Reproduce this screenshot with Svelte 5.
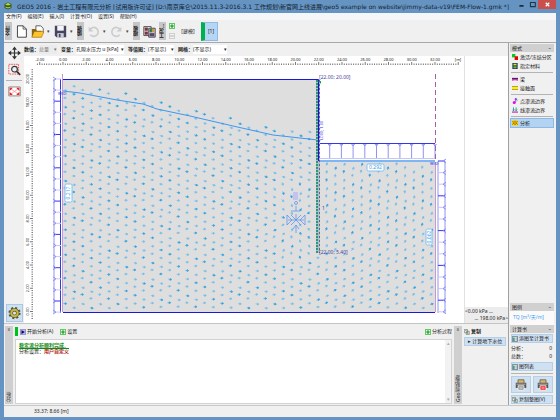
<script>
  const menus = ['文件(F)', '编辑(E)', '输入(I)', '计算书(O)', '设置(S)', '帮助(H)'];

  const modes = [
    { icon: 'zones', label: '激活/冻结分区' },
    { icon: 'material', label: '指定材料', last: true },
    { icon: 'beam', label: '梁' },
    { icon: 'contact', label: '接触面', last: true },
    { icon: 'point', label: '点渗流边界' },
    { icon: 'line', label: '线渗流边界', last: true },
    { icon: 'analysis', label: '分析' }
  ];
  let activeMode = 'analysis';

  // model geometry: 2 m = 23.25 units, origin in the lower left corner
  const left = 63;
  const right = 435;
  const wall = 318;
  const top = 79;
  const dig = 161;
  const bottom = 312;
  const step = 23.25;

  const water = [[63, 91], [80, 93], [117, 100], [143, 104], [157, 109], [190, 116], [233, 126], [273, 135], [318, 140]];

  const xLabels = Array.from({ length: 18 }, (_, i) => ({ x: left + (i - 1) * step, text: ((i - 1) * 2).toFixed(2) }));
  const yLabels = Array.from({ length: 11 }, (_, i) => ({ y: top + i * step, text: (20 - i * 2).toFixed(2) }));
  const xTicks = Array.from({ length: 182 }, (_, i) => ({ x: 37.4 + i * 2.325, long: (i - 1) % 10 === 0 }));
  const yTicks = Array.from({ length: 108 }, (_, i) => ({ y: 69.7 + i * 2.325, long: (i - 4) % 10 === 0 }));

  const leftRungs = Array.from({ length: 22 }, (_, i) => 79 + i * 11.1);
  const rightRungs = Array.from({ length: 14 }, (_, i) => 161 + i * 11.6);
  const topRungs = Array.from({ length: 11 }, (_, i) => 318 + i * 11.7);

  function waterLevel(x) {
    for (let i = 1; i < water.length; i++) {
      const [x0, y0] = water[i - 1];
      const [x1, y1] = water[i];
      if (x <= x1) return y0 + ((y1 - y0) * (x - x0)) / (x1 - x0);
    }
    return dig;
  }

  // seepage vectors run towards the well and up behind the wall
  function flowArrows() {
    const list = [];
    for (let c = 0; c < 43; c++) {
      for (let r = 0; r < 29; r++) {
        const jitter = Math.sin(c * 12.9 + r * 78.2);
        const x = 65 + c * 8.72 + jitter * 0.5;
        const y = 82 + r * 8.2 + (c % 2) * 4 + jitter * 0.7;
        if (x > right - 2 || y > bottom - 2) continue;
        if (x > wall - 4 && x < wall + 4 && y < 256) continue;
        if (x > wall && y < dig + 3) continue;
        if (x <= wall && y < waterLevel(x) - 8) continue;
        const dist = Math.hypot(x - 296, y - 220);
        if (dist < 7) continue;
        let angle;
        if (dist < 40 && x < wall) angle = Math.atan2(220 - y, 296 - x);
        else if (x < wall) angle = 0.05 + ((x - left) / 255) * (y < 200 ? 0.25 : -0.05);
        else angle = -1.35 + (Math.max(y - 200, 0) / 112) * 1.1;
        angle += jitter * 0.12;
        list.push({ x, y, deg: (angle * 180) / Math.PI, strong: (c * 7 + r * 5) % 3 === 0 });
      }
    }
    return list;
  }
  const arrows = flowArrows();
</script>

{#snippet icon(name)}
  <svg class="icon" viewBox="0 0 16 16" aria-hidden="true">
    {#if name === 'zones'}
      <path d="M0 0h9v9H0z" fill="#0c2" />
      <path d="M7 6h9v10H7z" fill="#e00" />
    {:else if name === 'material'}
      <path d="M1 0h14v16H1z" fill="#143c50" />
      <path d="M4 2h8v4H4z" fill="#fd0" />
      <path d="M4 7h8v3H4z" fill="#0c9" />
      <path d="M4 11h8v3H4z" fill="#e90" />
    {:else if name === 'beam'}
      <path d="M0 5h16v4H0z" fill="#333" />
      <path d="M1 13V9h14v4M5 13V9M11 13V9" fill="none" stroke="#d0d" stroke-width="2" />
    {:else if name === 'contact'}
      <path d="M0 3h16v10H0z" fill="#fe0" />
      <path d="M0 4h16M0 12h16" stroke="#985" stroke-width="2" />
    {:else if name === 'point'}
      <path d="M10 2v9M10 3l5 3" stroke="#17a" stroke-width="2" fill="none" />
      <circle cx="6" cy="12" r="4" fill="#e0e" />
      <circle cx="10" cy="3" r="3" fill="#a3e" />
    {:else if name === 'line'}
      <path d="M4 1v9M11 1v9M1 7l3 3 3-3M8 7l3 3 3-3" stroke="#088" stroke-width="2" fill="none" />
      <path d="M0 12h16v3H0z" fill="#b2a" />
    {:else if name === 'analysis'}
      <path d="M0 1h16v14H0z" fill="#fd0" />
      <path d="M0 2l4 4 4-4 4 4 4-4M0 13l4-4 4 4 4-4 4 4M2 8h12" stroke="#732" stroke-width="1.5" fill="none" />
    {:else if name === 'play'}
      <path d="M1 1h14v14H1z" fill="#b8bdf0" stroke="#228" />
      <path d="M4 3l9 5-9 5z" fill="#006" />
    {:else if name === 'plus'}
      <path d="M1 1h14v14H1z" fill="#efe" stroke="#2a2" stroke-width="2" />
      <path d="M8 3v10M3 8h10" stroke="#091" stroke-width="3" />
    {:else if name === 'minus'}
      <path d="M1 1h14v14H1z" fill="#f4f4f4" stroke="#bbb" stroke-width="2" />
      <path d="M3 8h10" stroke="#999" stroke-width="2" />
    {:else if name === 'picture'}
      <path d="M1 1h14v14H1z" fill="#eef4fa" stroke="#567" stroke-width="2" />
      <path d="M3 4h4v9H3z" fill="#296" />
      <path d="M9 5h5M9 8h5M9 11h5" stroke="#345" />
    {:else if name === 'copy'}
      <path d="M1 1h8v9H1zM6 6h8v9H6z" fill="#fff" stroke="#555" stroke-width="1.5" />
      <path d="M3 4h4M8 9h4M8 12h4" stroke="#284" stroke-width="1.5" />
    {/if}
  </svg>
{/snippet}

<div class="window">
  <header class="titlebar">
    <svg class="logo" viewBox="0 0 16 16" aria-hidden="true">
      <path d="M1 4l7-3 7 3v8l-7 3-7-3z" fill="#2c5a28" />
      <path d="M2 5l6 2 6-2-6-3z" fill="#c3d92f" />
      <path d="M3 9l5 2 5-2v2l-5 2-5-2z" fill="#dccf35" />
    </svg>
    <h1>GEO5 2016 - 岩土工程有限元分析 [试用版许可证] [D:\南京库仑\2015.11.3-2016.3.1 工作规划\新官网上线进展\geo5 example on website\jimmy-data-v19\FEM-Flow-1.gmk *]</h1>
    <button class="caption" aria-label="最小化"><svg viewBox="0 0 10 10"><path d="M2 7h6" stroke="#111" stroke-width="2" /></svg></button>
    <button class="caption" aria-label="最大化"><svg viewBox="0 0 10 10"><path d="M2 2h7v6H2z" fill="none" stroke="#234" stroke-width="1.5" /></svg></button>
    <button class="caption close" aria-label="关闭"><svg viewBox="0 0 10 10"><path d="M2.500 2.500l5 5M7.500 2.500l-5 5" stroke="#fff" stroke-width="1.700" /></svg></button>
  </header>

  <nav class="menu">
    {#each menus as item}
      <button>{item}</button>
    {/each}
  </nav>

  <div class="toolbar">
    <span class="grip">文件</span>
    <button class="tool" aria-label="新建">
      <svg viewBox="0 0 16 16"><path d="M3 1h7l4 4v10H3z" fill="#fff" stroke="#444" stroke-width="1.200" /><path d="M10 1v4h4" fill="none" stroke="#444" /></svg>
    </button>
    <button class="tool" aria-label="打开">
      <svg viewBox="0 0 16 16"><path d="M6 1h6l3 3v6H6z" fill="#fff" stroke="#444" /><path d="M1 5h5l1 2h6v8H1z" fill="#8a6410" /><path d="M4 8h12l-3 7H1z" fill="#ffc327" stroke="#8a6410" stroke-width=".6" /></svg>
    </button>
    <span class="drop">▾</span>
    <button class="tool" aria-label="保存">
      <svg viewBox="0 0 16 16"><path d="M1 1h14v14H3l-2-2z" fill="#45455e" /><path d="M4 1h8v6H4z" fill="#f3f5fa" /><path d="M4 10h8v5H4z" fill="#c8ccd8" /><path d="M6 11h2v4H6z" fill="#45455e" /></svg>
    </button>
    <span class="drop">▾</span>
    <span class="grip">编辑</span>
    <button class="tool" aria-label="撤销" disabled>
      <svg viewBox="0 0 16 16"><path d="M4 5a5.500 5.500 0 1 1 0 7" fill="none" stroke="#ccc" stroke-width="2" /><path d="M2 2v6h6z" fill="#ccc" /></svg>
    </button>
    <span class="drop">▾</span>
    <button class="tool" aria-label="重做" disabled>
      <svg viewBox="0 0 16 16"><path d="M12 5a5.500 5.500 0 1 0 0 7" fill="none" stroke="#ccc" stroke-width="2" /><path d="M14 2v6H8z" fill="#ccc" /></svg>
    </button>
    <span class="drop">▾</span>
    <span class="grip">模板</span>
    <button class="tool" aria-label="模板">
      <svg viewBox="0 0 16 16"><path d="M1 2h9v11H1z" fill="#fff" stroke="#333" /><path d="M2 3h4v4H2zM2 8h4v4H2z" fill="#734" /><path d="M7 4h8v11H7z" fill="#dce" stroke="#333" /><path d="M8 5h3v4H8z" fill="#2a7a3a" /><path d="M11 5h3v4h-3z" fill="#c93" /><path d="M8 10h6v4H8z" fill="#534a68" /></svg>
    </button>
    <span class="grip">工况…</span>
    <div class="stage-edit">
      <button aria-label="添加工况">{@render icon('plus')}</button>
      <button aria-label="删除工况">{@render icon('minus')}</button>
    </div>
    <button class="stage">[建模]</button>
    <button class="stage on">[1]</button>
  </div>

  <div class="body">
    <main>
      <section class="upper">
        <div class="tools">
          <button aria-label="平移">
            <svg viewBox="0 0 16 16"><path d="M8 2v12M2 8h12" stroke="#333" stroke-width="1.500" /><path d="M8 0l3 4H5zM8 16l3-4H5zM0 8l4-3v6zM16 8l-4-3v6z" fill="#333" /></svg>
          </button>
          <button aria-label="缩放窗口">
            <svg viewBox="0 0 16 16"><path d="M1 1h12v12H1z" fill="none" stroke="#e33" stroke-dasharray="2 1" /><circle cx="8" cy="7" r="3.500" fill="#eef" stroke="#333" stroke-width="1.400" /><path d="M11 10l4 4" stroke="#333" stroke-width="2" /></svg>
          </button>
          <hr />
          <button aria-label="全部显示">
            <svg viewBox="0 0 16 16"><path d="M1 3h14v11H1z" fill="#fff" stroke="#777" /><path d="M3 5l10 7M13 5L3 12" stroke="#f99" /><path d="M2 4h4L2 8zM14 4h-4l4 4zM2 13h4L2 9zM14 13h-4l4-4z" fill="#e22" /></svg>
          </button>
          <button class="gear" aria-label="绘图设置">
            <svg viewBox="0 0 16 16"><circle cx="8" cy="8" r="6.300" fill="none" stroke="#585636" stroke-width="2.500" stroke-dasharray="2.500 2.450" /><circle cx="8" cy="8" r="4" fill="none" stroke="#55543c" stroke-width="4" /><circle cx="8" cy="8" r="4" fill="none" stroke="#c8b83c" stroke-width="2.500" /></svg>
          </button>
        </div>

        <div class="view">
          <div class="settings">
            <label for="values">数值：</label>
            <span class="combo short off"><select id="values" disabled><option>总量</option></select></span>
            <label for="variable">变量：</label>
            <span class="combo long"><select id="variable"><option>孔隙水压力 u [kPa]</option></select></span>
            <label for="contour">等值图：</label>
            <span class="combo"><select id="contour"><option>(不显示)</option></select></span>
            <label for="mesh">网格：</label>
            <span class="combo wide"><select id="mesh"><option>(不显示)</option></select></span>
          </div>

          <div class="scene">
            <svg class="drawing" viewBox="24 56 440 267" role="img" aria-label="渗流分析结果">
              <g class="ruler">
                {#each xLabels as l}
                  <text x={l.x} y="61" text-anchor="middle">{l.text}</text>
                {/each}
                <text x="458" y="61" text-anchor="middle">[m]</text>
                {#each xTicks as t}
                  <path d="M{t.x} 65v-{t.long ? 3 : 1.5}" />
                {/each}
                {#each yLabels as l}
                  <text transform="translate(29 {l.y}) rotate(-90)" text-anchor="middle">{l.text}</text>
                {/each}
                {#each yTicks as t}
                  <path d="M33 {t.y}h-{t.long ? 3 : 1.5}" />
                {/each}
              </g>

              <path class="soil" d="M{left} {top}H{wall}V{dig}H{right}V{bottom}H{left}z" />

              <!-- flow vectors -->
              {#each arrows as a}
                <path class="arrow" class:strong={a.strong} d="M-1.700 0H1M0-1L1.700 0L0 1z" transform="translate({a.x} {a.y}) rotate({a.deg})" />
              {/each}

              <polyline class="water" points={water.map((p) => p.join(',')).join(' ')} />

              <!-- water supports -->
              <g class="support">
                <path class="mid" d="M54 79V313M438 161V313M445 161V313" />
                <path class="full" d="M60.500 79V313M318 143.500H435" />
                {#each leftRungs as y, i}
                  <path class={i % 3 === 2 ? 'full' : 'pale'} d="M54 {y}H61" />
                  <path class="mid" d="M53 {y - 2}l3 2-3 2" />
                {/each}
                {#each rightRungs as y, i}
                  <path class={i % 3 === 0 ? 'full' : 'pale'} d="M438 {y}H445" />
                  <path class="mid" d="M446 {y - 2}l-3 2 3 2" />
                {/each}
                {#each topRungs as x}
                  <path class="mid" d="M{x} 144V159M{x - 1.5} 144l1.500 2 1.500-2" />
                {/each}
                <path class="pale" d="M318 158.500H435" />
              </g>

              <path class="level" d="M319 161H{right}" />
              <path class="limit" d="M62.500 74V312M{right + 0.5} 162V312" />
              <path class="axis" d="M435.500 74V161" />
              <path class="edge" d="M{left} 79.500H318.500V161M{left} 312.500H{right}" />

              <!-- sheet pile wall -->
              <path d="M316 80h4v173h-4z" fill="#a9c4bd" />
              <path d="M317 80V253" stroke="#2c9482" stroke-width="2" stroke-dasharray="2 1" />
              <path d="M319.500 80V253" stroke="#6f55ad" stroke-dasharray="2 2" />
              <path d="M318.500 80V161" stroke="#1a10d8" />
              <path d="M318 81h3v3z" fill="#1a3" />

              <!-- well -->
              <g class="well">
                <path d="M291 211h9M296 206v5M287 215l5 5-5 5zM305 215l-5 5 5 5zM288 220h16M296 214v6M291 215l10 10M301 215l-10 10M296 225v8M293 229l3-4 3 4" />
                <path d="M293 192h5v8h-5z" fill="#c3c3ef" stroke="none" />
                <circle cx="296" cy="203" r="1.500" />
              </g>

              <g class="note">
                <text x="319" y="79">[22.00; 20.00]</text>
                <text x="319" y="254">[22.00; 5.40]</text>
                <text class="blue" x="58" y="95">W(0)</text>
                <text class="blue" x="430" y="165">W(0)</text>
                <text class="blue" transform="translate(323 141) rotate(-90)">1.000; 1.00</text>
                <text x="322" y="210">1</text>
              </g>

              <g class="tag">
                <rect x="367" y="164" width="17" height="7" rx="1.500" />
                <text x="375.500" y="169" text-anchor="middle">0.292</text>
                <rect x="65" y="184" width="7" height="18" rx="1.500" />
                <text transform="translate(70 193) rotate(-90)" text-anchor="middle">0.217</text>
                <rect x="426" y="229" width="6" height="16" rx="1.500" />
                <text transform="translate(431 237) rotate(-90)" text-anchor="middle">0.062</text>
              </g>
            </svg>
            <aside class="legend">
              <div class="range"><span>&lt;0.00 kPa ...</span><span class="max">... 198.00 kPa&gt;</span></div>
            </aside>
          </div>
        </div>
      </section>

      <section class="lower">
        <div class="strip"><span class="pin">¤</span><span>分析</span></div>
        <div class="report">
          <div class="actions">
            <i class="mark"></i>
            <button>{@render icon('play')}开始分析(A)</button>
            <button>{@render icon('plus')}设置</button>
            <button class="log">{@render icon('plus')}分析过程</button>
          </div>
          <div class="output">
            <div class="text">
              <p class="done">稳定流分析顺利完成。</p>
              <p>分析设置：<b>用户自定义</b></p>
            </div>
            <div class="scroll"><span>▴</span><span>▾</span></div>
          </div>
        </div>
        <div class="strip"><span class="pin">¤</span><span>Geo剪贴板™</span></div>
        <div class="clipboard">
          <h2>{@render icon('copy')}复制</h2>
          <button class="blue-btn">▸ 计算地下水位</button>
        </div>
      </section>
    </main>

    <aside class="side">
      <h2>模式<span>–</span></h2>
      <div class="modes">
        {#each modes as mode}
          <button class:active={activeMode === mode.icon} onclick={() => (activeMode = mode.icon)}>
            {@render icon(mode.icon)}{mode.label}
          </button>
          {#if mode.last}<hr />{/if}
        {/each}
      </div>
      <h2>图例<span>–</span></h2>
      <p class="unit">TQ [m³/天/m]</p>
      <h2>计算书<span>–</span></h2>
      <div class="book">
        <button class="blue-btn">{@render icon('picture')}添图至计算书</button>
        <dl>
          <dt>分析：</dt><dd>0</dd>
          <dt>总数：</dt><dd>0</dd>
        </dl>
        <button class="blue-btn">{@render icon('picture')}图列表</button>
        <hr />
        <div class="printers">
          {#each ['#999', '#e33'] as paper}
            <button class="blue-btn" aria-label={paper === '#999' ? '打印' : '导出 PDF'}>
              <svg viewBox="0 0 16 16"><path d="M4 1h8v5H4z" fill="#d6b56d" stroke="#654" /><path d="M1 5h14v7H1z" fill="#555" /><path d="M2 6h12v2H2z" fill="#999" /><path d="M4 9h8v6H4z" fill={paper} stroke="#fff" /><path d="M6 12h4" stroke="#fff" /></svg>
            </button>
          {/each}
        </div>
        <button class="blue-btn">{@render icon('copy')}复制整图(V)</button>
      </div>
    </aside>
  </div>

  <footer>33.37; 8.66 [m]</footer>
</div>

<style>
  :global(body) {
    margin: 0;
  }

  .window {
    display: flex;
    flex-direction: column;
    min-height: 100vh;
    box-sizing: border-box;
    padding: 0 4px 4px;
    background: #6594c2;
    color: #222;
    font: 5px/7px 'Noto Sans', 'Noto Sans CJK SC', sans-serif;
    white-space: nowrap;
  }

  button,
  select {
    margin: 0;
    padding: 0;
    border: 0;
    border-radius: 0;
    background: none;
    color: inherit;
    font: inherit;
  }

  h1,
  h2,
  p,
  dl,
  dd {
    margin: 0;
    font: inherit;
  }

  hr {
    width: 100%;
    margin: 0;
    border: 0;
    border-top: 1px solid #b4b4b4;
  }

  svg {
    display: block;
  }

  .icon {
    flex: none;
    width: 6px;
    height: 6px;
  }

  .titlebar {
    display: flex;
    height: 13px;
    color: #14222f;
  }

  .titlebar .logo {
    width: 8px;
    height: 8px;
    margin: 2px 5px 0 0;
  }

  .titlebar h1 {
    flex: 1;
    min-width: 0;
    overflow: hidden;
    font-family: 'DejaVu Sans', 'Noto Sans CJK SC', sans-serif;
    font-size: 6px;
    line-height: 13px;
  }

  .caption {
    width: 11px;
    height: 9px;
  }

  .caption svg {
    width: 7px;
    height: 7px;
    margin: 0 auto;
  }

  .caption.close {
    width: 18px;
    background: #c9504c;
  }

  .menu {
    display: flex;
    gap: 6px;
    height: 7px;
    padding-left: 2px;
    background: #f5f6f8;
  }

  .toolbar {
    display: flex;
    align-items: center;
    gap: 3px;
    height: 22px;
    padding-left: 1px;
    border-bottom: 1px solid #a8a8a8;
    background: #f0f0f0;
  }

  .grip {
    width: 7px;
    height: 18px;
    background: #c6c6c6;
    font-weight: 700;
    text-align: center;
    writing-mode: vertical-rl;
    transform: rotate(180deg);
  }

  .tool svg {
    width: 13px;
    height: 13px;
  }

  .drop {
    width: 4px;
    color: #444;
  }

  .stage-edit {
    display: flex;
    flex-direction: column;
    gap: 4px;
  }

  .stage {
    width: 20px;
    height: 19px;
  }

  .stage.on {
    box-sizing: border-box;
    width: 17px;
    border: 1px solid #8fbbe8;
    border-left: 4px solid #00b050;
    background: #b5d5f5;
  }

  .body {
    display: flex;
    flex: 1;
    background: #f0f0f0;
  }

  main {
    display: flex;
    flex: 1;
    flex-direction: column;
    min-width: 0;
  }

  .upper {
    display: flex;
    flex: 1;
  }

  .tools {
    display: flex;
    flex-direction: column;
    align-items: center;
    gap: 3px;
    box-sizing: border-box;
    width: 20px;
    padding: 3px 2px 1px;
  }

  .tools svg {
    width: 13px;
    height: 14px;
  }

  .tools .gear {
    margin-top: auto;
    padding: 1px;
    border: 1px solid #aac8e6;
    background: #cfe0f0;
  }

  .view {
    display: flex;
    flex: 1;
    flex-direction: column;
    min-width: 0;
  }

  .settings {
    display: flex;
    align-items: center;
    height: 13px;
  }

  .settings label {
    font-weight: 700;
  }

  .combo {
    display: flex;
    align-items: center;
    width: 26px;
    height: 9px;
    margin-right: 4px;
    background: #fff;
  }

  .combo::after {
    content: '▾';
  }

  .combo.short {
    width: 18px;
  }

  .combo.long {
    width: 48px;
  }

  .combo.wide {
    width: 34px;
  }

  .combo.off {
    background: #ebebeb;
    color: #777;
  }

  .combo select {
    flex: 1;
    min-width: 0;
    appearance: none;
    opacity: 1;
  }

  .scene {
    display: flex;
    flex: 1;
    background: #fff;
  }

  .drawing {
    flex: 1;
    min-width: 0;
  }

  .ruler path {
    stroke: #555;
    stroke-width: 0.8;
  }

  .ruler text {
    fill: #222;
    font-size: 4px;
  }

  .soil {
    fill: #dedede;
  }

  .arrow {
    fill: #74bde8;
    stroke: #74bde8;
    stroke-width: 0.6;
  }

  .arrow.strong {
    fill: #2fa2e2;
    stroke: #2fa2e2;
  }

  .water {
    fill: none;
    stroke: #3f97ee;
  }

  .support path {
    fill: none;
  }

  .support .full {
    stroke: #3535ec;
  }

  .support .mid {
    stroke: #9292f5;
  }

  .support .pale {
    stroke: #c6c6fb;
  }

  .level {
    stroke: #7db6f0;
    stroke-width: 2;
  }

  .limit {
    stroke: #c49bc8;
  }

  .axis {
    stroke: #a55fa5;
    stroke-dasharray: 5 3;
  }

  .edge {
    fill: none;
    stroke: #1717e6;
  }

  .well {
    fill: none;
    stroke: #5f96ee;
    stroke-width: 0.8;
  }

  .note text {
    fill: #4b3f9c;
    font-size: 5px;
  }

  .note text.blue {
    fill: #3030e0;
    font-size: 4px;
  }

  .tag rect {
    fill: #fff;
    stroke: #7fc0f2;
  }

  .tag text {
    fill: #3f9be6;
    font-size: 5px;
  }

  .legend {
    display: flex;
    flex-direction: column;
    justify-content: flex-end;
    width: 43px;
    border-left: 1px solid #e2e2e2;
  }

  .range {
    display: flex;
    flex-direction: column;
    padding: 1px 0;
    background: #ececec;
  }

  .range .max {
    text-align: right;
  }

  .lower {
    display: flex;
    gap: 2px;
    height: 78px;
    padding: 2px 2px 1px 1px;
    border-top: 1px solid #c4c4c4;
  }

  .strip {
    display: flex;
    justify-content: space-between;
    box-sizing: border-box;
    width: 8px;
    padding: 2px 0;
    background: #cfcfcf;
    line-height: 8px;
    writing-mode: vertical-rl;
    transform: rotate(180deg);
    flex-direction: row-reverse;
  }

  .report {
    display: flex;
    flex: 1;
    flex-direction: column;
    gap: 2px;
    min-width: 0;
  }

  .actions {
    display: flex;
    align-items: center;
    gap: 7px;
    height: 11px;
  }

  .actions button,
  .modes button,
  .book button,
  .clipboard h2 {
    display: flex;
    align-items: center;
    gap: 1px;
  }

  .mark {
    width: 3px;
    height: 9px;
    margin-right: -5px;
    background: #00c020;
  }

  .actions .log {
    margin-left: auto;
  }

  .output {
    display: flex;
    flex: 1;
    justify-content: space-between;
    border: 1px solid #d2d2d2;
    background: #fff;
  }

  .text {
    padding: 2px 3px;
    line-height: 6px;
  }

  .done {
    color: #108a10;
    font-weight: 700;
    text-decoration: underline;
  }

  .text b {
    color: #b01818;
  }

  .scroll {
    display: flex;
    flex-direction: column;
    justify-content: space-between;
    width: 6px;
    background: #f2f2f2;
    color: #aaa;
    text-align: center;
  }

  .clipboard {
    width: 42px;
    padding-top: 2px;
  }

  .clipboard h2 {
    margin-bottom: 2px;
    font-weight: 700;
  }

  .blue-btn {
    box-sizing: border-box;
    width: 100%;
    min-height: 9px;
    border: 1px solid #b4cfe8;
    background: #cfe0f1;
  }

  .side {
    display: flex;
    flex-direction: column;
    box-sizing: border-box;
    width: 48px;
    padding: 1px 2px 0 1px;
    border-left: 1px solid #a0a0a0;
  }

  .side h2 {
    display: flex;
    justify-content: space-between;
    padding: 0 3px 0 2px;
    background: #d0d0d0;
    line-height: 8px;
  }

  .modes {
    display: flex;
    flex: 1;
    flex-direction: column;
    gap: 1px;
    padding: 1px;
  }

  .modes button {
    height: 8px;
    padding-left: 1px;
    gap: 2px;
  }

  .modes hr {
    margin: 1px 0;
  }

  .modes .active {
    background: #b2d3f2;
    outline: 1px solid #8db9e4;
  }

  .unit {
    padding: 3px 3px 4px;
    background: #fafafa;
    color: #4aa0ec;
  }

  .book {
    display: flex;
    flex-direction: column;
    gap: 2px;
    padding: 1px;
  }

  .book dl {
    display: grid;
    grid-template-columns: 1fr auto;
    row-gap: 1px;
    padding-right: 1px;
  }

  .printers {
    display: flex;
    gap: 2px;
  }

  .printers .blue-btn {
    justify-content: center;
    height: 17px;
  }

  .printers svg {
    width: 12px;
    height: 14px;
  }

  footer {
    height: 11px;
    padding-left: 30px;
    border-top: 1px solid #c8c8c8;
    background: #f0f0f0;
    line-height: 11px;
  }
</style>
